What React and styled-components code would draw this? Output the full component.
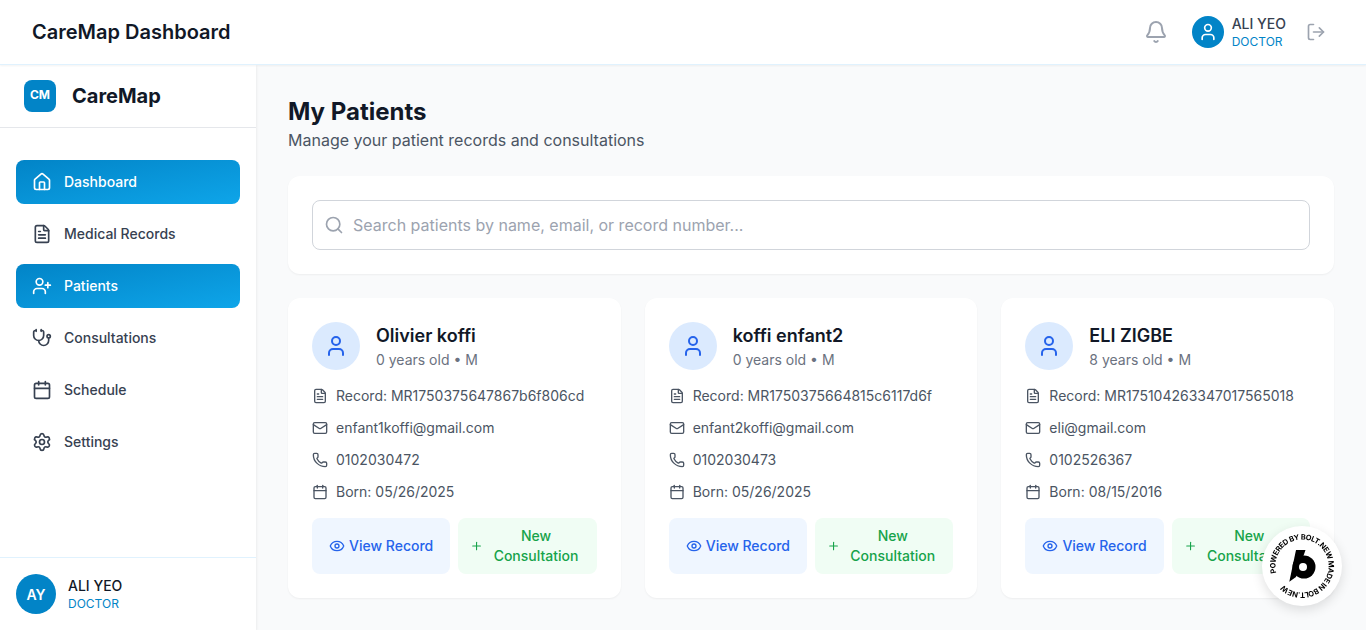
import React from "react";
import styled, { createGlobalStyle } from "styled-components";
import {
  Bell,
  Calendar,
  Eye,
  FileText,
  House,
  LogOut,
  Mail,
  Phone,
  Plus,
  Search,
  Settings,
  Stethoscope,
  User,
  UserPlus,
} from "lucide-react";

const navItems = [
  { label: "Dashboard", icon: House, active: true },
  { label: "Medical Records", icon: FileText },
  { label: "Patients", icon: UserPlus, active: true },
  { label: "Consultations", icon: Stethoscope },
  { label: "Schedule", icon: Calendar },
  { label: "Settings", icon: Settings },
];

const patients = [
  {
    name: "Olivier koffi",
    age: "0 years old • M",
    record: "MR1750375647867b6f806cd",
    email: "enfant1koffi@gmail.com",
    phone: "0102030472",
    born: "05/26/2025",
  },
  {
    name: "koffi enfant2",
    age: "0 years old • M",
    record: "MR1750375664815c6117d6f",
    email: "enfant2koffi@gmail.com",
    phone: "0102030473",
    born: "05/26/2025",
  },
  {
    name: "ELI ZIGBE",
    age: "8 years old • M",
    record: "MR175104263347017565018",
    email: "eli@gmail.com",
    phone: "0102526367",
    born: "08/15/2016",
  },
];

function App() {
  return (
    <>
      <GlobalStyle />
      <Shell>
        <Header>
          <HeaderTitle>CareMap Dashboard</HeaderTitle>
          <HeaderRight>
            <BellButton>
              <Bell size={24} />
            </BellButton>
            <HeaderUser>
              <HeaderAvatar>
                <User size={20} />
              </HeaderAvatar>
              <div>
                <HeaderName>ALI YEO</HeaderName>
                <RoleText>DOCTOR</RoleText>
              </div>
            </HeaderUser>
            <LogoutButton>
              <LogOut size={20} />
            </LogoutButton>
          </HeaderRight>
        </Header>
        <Body>
          <Sidebar>
            <Brand>
              <BrandLogo>CM</BrandLogo>
              <BrandName>CareMap</BrandName>
            </Brand>
            <Nav>
              {navItems.map((item) => (
                <NavItem key={item.label} $active={item.active}>
                  <item.icon size={20} />
                  {item.label}
                </NavItem>
              ))}
            </Nav>
            <SideFooter>
              <FooterAvatar>AY</FooterAvatar>
              <div>
                <FooterName>ALI YEO</FooterName>
                <RoleText>DOCTOR</RoleText>
              </div>
            </SideFooter>
          </Sidebar>
          <Main>
            <PageTitle>My Patients</PageTitle>
            <PageSub>Manage your patient records and consultations</PageSub>
            <SearchCard>
              <SearchBox>
                <Search size={20} />
                <SearchInput placeholder="Search patients by name, email, or record number..." />
              </SearchBox>
            </SearchCard>
            <CardGrid>
              {patients.map((p) => (
                <Card key={p.name}>
                  <CardTop>
                    <PatientAvatar>
                      <User size={24} />
                    </PatientAvatar>
                    <div>
                      <PatientName>{p.name}</PatientName>
                      <PatientAge>{p.age}</PatientAge>
                    </div>
                  </CardTop>
                  <Details>
                    <Detail>
                      <FileText size={16} />
                      Record: {p.record}
                    </Detail>
                    <Detail>
                      <Mail size={16} />
                      {p.email}
                    </Detail>
                    <Detail>
                      <Phone size={16} />
                      {p.phone}
                    </Detail>
                    <Detail>
                      <Calendar size={16} />
                      Born: {p.born}
                    </Detail>
                  </Details>
                  <Actions>
                    <ViewButton>
                      <Eye size={16} />
                      View Record
                    </ViewButton>
                    <ConsultButton>
                      <Plus size={16} />
                      <span>New Consultation</span>
                    </ConsultButton>
                  </Actions>
                </Card>
              ))}
            </CardGrid>
          </Main>
        </Body>
      </Shell>
      <BoltBadge>
        <svg width="80" height="80" viewBox="0 0 80 80">
          <defs>
            <path
              id="badge-ring"
              d="M14.4 46.9A26.5 26.5 0 1 1 65.6 33.1A26.5 26.5 0 1 1 14.4 46.9"
            />
          </defs>
          <text fontSize="7.5" fontWeight="700" fontFamily="Inter, sans-serif" fill="#000">
            <textPath href="#badge-ring" textLength="152" lengthAdjust="spacing">
              POWERED BY BOLT.NEW MADE IN BOLT.NEW
            </textPath>
          </text>
          <polygon points="34,24 43.5,24 40,34 34,51 27.3,55.7" fill="#000" />
          <circle cx="42" cy="41" r="11.5" fill="#000" />
          <circle cx="41" cy="41" r="4" fill="#fff" />
        </svg>
      </BoltBadge>
    </>
  );
}

export default App;

const GlobalStyle = createGlobalStyle`
  * {
    box-sizing: border-box;
  }
  body {
    margin: 0;
    font-family: Inter, "Liberation Sans", sans-serif;
    background: #f9fafb;
    overflow: hidden;
  }
`;

const Shell = styled.div`
  height: 100vh;
  display: flex;
  flex-direction: column;
  overflow: hidden;
`;

const Header = styled.header`
  height: 65px;
  flex-shrink: 0;
  padding: 0 32px;
  display: flex;
  align-items: center;
  justify-content: space-between;
  background: #fff;
  border-bottom: 1px solid #e0f2fe;
  box-shadow: 0 1px 2px rgba(0, 0, 0, 0.05);
  position: relative;
  z-index: 2;
`;

const HeaderTitle = styled.h1`
  margin: 0;
  font-size: 20px;
  line-height: 28px;
  font-weight: 600;
  color: #111827;
`;

const HeaderRight = styled.div`
  display: flex;
  align-items: center;
  gap: 16px;
`;

const BellButton = styled.div`
  display: flex;
  padding: 0 8px;
  color: #9ca3af;
`;

const HeaderUser = styled.div`
  display: flex;
  align-items: center;
  gap: 8px;
`;

const HeaderAvatar = styled.div`
  width: 32px;
  height: 32px;
  border-radius: 50%;
  background: #0284c7;
  color: #fff;
  display: flex;
  align-items: center;
  justify-content: center;
`;

const HeaderName = styled.div`
  font-size: 14px;
  line-height: 20px;
  font-weight: 500;
  color: #374151;
`;

const RoleText = styled.div`
  font-size: 12px;
  line-height: 16px;
  color: #0284c7;
`;

const LogoutButton = styled.div`
  display: flex;
  margin: 0 8px 0 4px;
  color: #9ca3af;
`;

const Body = styled.div`
  flex: 1;
  min-height: 0;
  display: flex;
`;

const Sidebar = styled.aside`
  width: 256px;
  flex-shrink: 0;
  display: flex;
  flex-direction: column;
  background: #fff;
  box-shadow: 0 1px 3px rgba(0, 0, 0, 0.1);
`;

const Brand = styled.div`
  height: 63px;
  padding: 0 24px;
  display: flex;
  align-items: center;
  gap: 16px;
  border-bottom: 1px solid #e5e7eb;
`;

const BrandLogo = styled.div`
  width: 32px;
  height: 32px;
  border-radius: 8px;
  padding-bottom: 3px;
  background: #0284c7;
  color: #fff;
  font-size: 12px;
  font-weight: 700;
  display: flex;
  align-items: center;
  justify-content: center;
`;

const BrandName = styled.div`
  font-size: 20px;
  font-weight: 700;
  color: #111827;
`;

const Nav = styled.nav`
  flex: 1;
  padding: 31.6px 16px 0;
  display: flex;
  flex-direction: column;
  gap: 8px;
`;

const NavItem = styled.div`
  height: 44px;
  padding: 0 16px;
  border-radius: 8px;
  display: flex;
  align-items: center;
  gap: 12px;
  font-size: 14px;
  font-weight: 500;
  color: ${(p) => (p.$active ? "#fff" : "#374151")};
  background: ${(p) =>
    p.$active ? "linear-gradient(to bottom right, #0284c7, #0ea5e9)" : "transparent"};
`;

const SideFooter = styled.div`
  height: 73px;
  padding: 16px;
  display: flex;
  align-items: center;
  gap: 12px;
  border-top: 1px solid #e0f2fe;
`;

const FooterAvatar = styled.div`
  width: 40px;
  height: 40px;
  border-radius: 50%;
  background: #0284c7;
  color: #fff;
  font-size: 14px;
  font-weight: 600;
  display: flex;
  align-items: center;
  justify-content: center;
`;

const FooterName = styled.div`
  font-size: 14px;
  line-height: 20px;
  font-weight: 500;
  color: #111827;
`;

const Main = styled.main`
  flex: 1;
  min-width: 0;
  padding: 31.4px 32px 32px;
  overflow: hidden;
`;

const PageTitle = styled.h2`
  margin: 0;
  font-size: 24px;
  line-height: 32px;
  font-weight: 700;
  color: #111827;
`;

const PageSub = styled.p`
  margin: 0 0 24px;
  font-size: 16px;
  line-height: 24px;
  color: #4b5563;
`;

const SearchCard = styled.div`
  padding: 24px;
  background: #fff;
  border-radius: 12px;
  box-shadow: 0 1px 2px rgba(0, 0, 0, 0.05);
  margin-bottom: 24px;
`;

const SearchBox = styled.div`
  height: 50px;
  padding: 0 11px;
  display: flex;
  align-items: center;
  gap: 9px;
  border: 1px solid #d1d5db;
  border-radius: 8px;
  color: #9ca3af;
`;

const SearchInput = styled.input`
  flex: 1;
  padding: 0;
  border: none;
  outline: none;
  background: transparent;
  font-family: inherit;
  font-size: 16px;
  color: #111827;
  &::placeholder {
    color: #9ca3af;
    opacity: 1;
  }
`;

const CardGrid = styled.div`
  display: grid;
  grid-template-columns: repeat(3, 1fr);
  gap: 24px;
`;

const Card = styled.div`
  padding: 24px;
  background: #fff;
  border-radius: 12px;
  box-shadow: 0 1px 2px rgba(0, 0, 0, 0.05);
`;

const CardTop = styled.div`
  display: flex;
  align-items: center;
  gap: 16px;
  margin-bottom: 16px;
`;

const PatientAvatar = styled.div`
  width: 48px;
  height: 48px;
  border-radius: 50%;
  background: #dbeafe;
  color: #2563eb;
  display: flex;
  align-items: center;
  justify-content: center;
`;

const PatientName = styled.div`
  font-size: 18px;
  line-height: 28px;
  font-weight: 600;
  color: #111827;
`;

const PatientAge = styled.div`
  font-size: 14px;
  line-height: 20px;
  color: #6b7280;
`;

const Details = styled.div`
  display: flex;
  flex-direction: column;
  gap: 12px;
  margin-bottom: 16px;
`;

const Detail = styled.div`
  display: flex;
  align-items: center;
  gap: 8px;
  font-size: 14px;
  line-height: 20px;
  color: #4b5563;
`;

const Actions = styled.div`
  display: flex;
  gap: 8px;
`;

const ViewButton = styled.div`
  flex: 1;
  padding: 8px 12px;
  border-radius: 8px;
  background: #eff6ff;
  color: #2563eb;
  font-size: 14px;
  line-height: 20px;
  font-weight: 500;
  display: flex;
  align-items: center;
  justify-content: center;
  gap: 4px;
`;

const ConsultButton = styled(ViewButton)`
  background: #f0fdf4;
  color: #16a34a;
  text-align: center;
`;

const BoltBadge = styled.div`
  position: fixed;
  right: 24px;
  bottom: 24px;
  width: 80px;
  height: 80px;
  border-radius: 50%;
  background: #fff;
  box-shadow: 0 4px 12px rgba(0, 0, 0, 0.12);
`;
